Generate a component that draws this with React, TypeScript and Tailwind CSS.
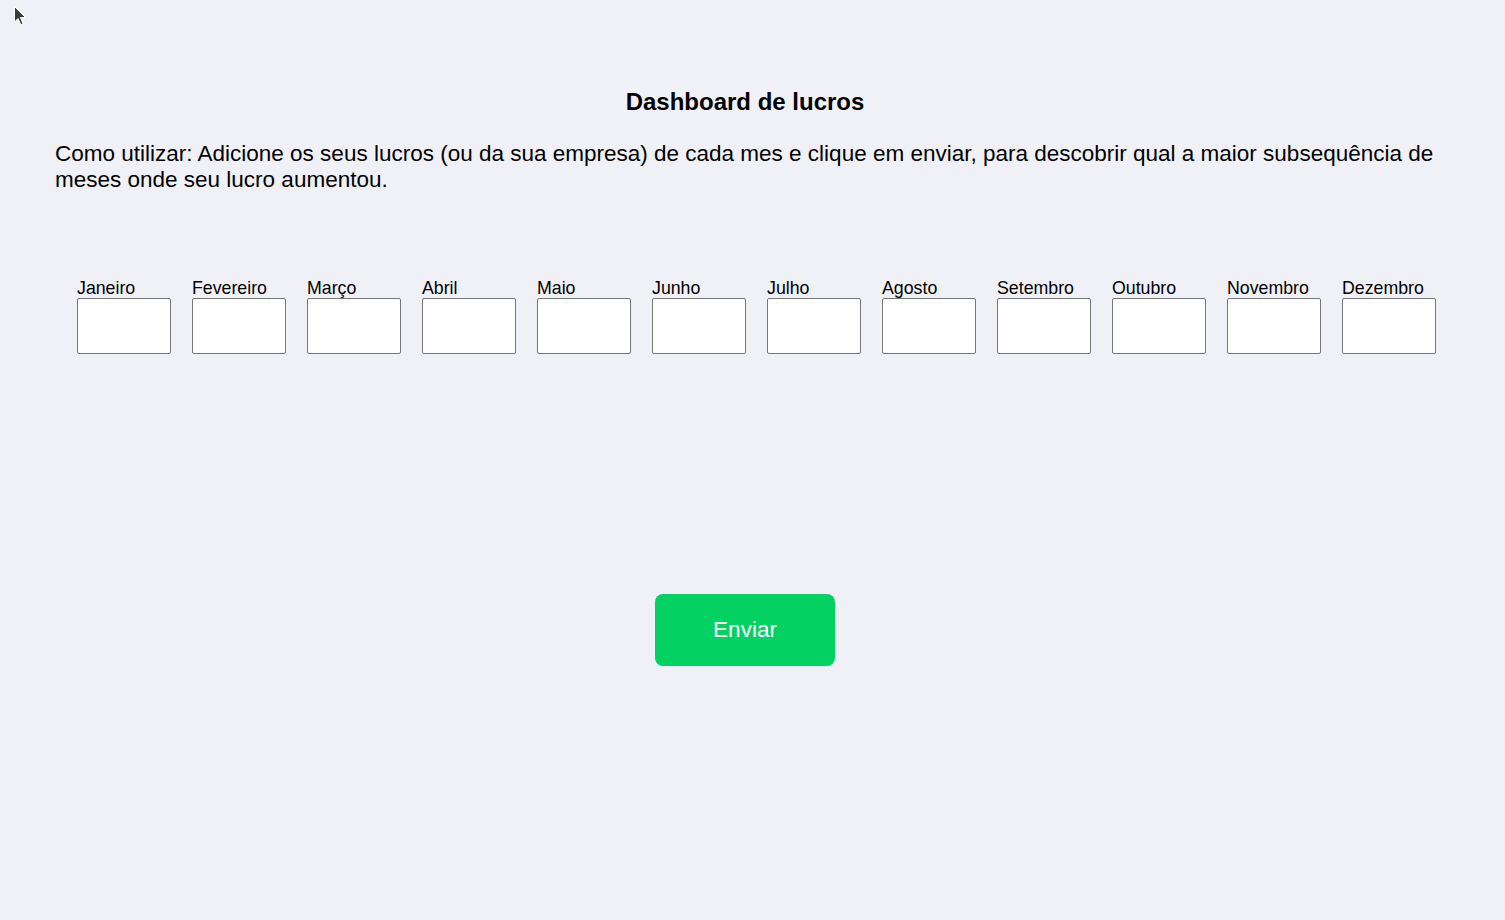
import React from "react";

const months = ["Janeiro","Fevereiro","Março","Abril","Maio","Junho","Julho","Agosto","Setembro","Outubro","Novembro","Dezembro"];

export default function App() {
  return (
    <div className="relative min-h-[920px] w-full bg-[#f0f1f6] text-black" style={{ fontFamily: '"Liberation Sans", Arial, sans-serif' }}>
      <svg className="absolute left-[13px] top-[5px]" width="16" height="22" viewBox="0 0 16 22">
        <path d="M1.5 1.5 L1.5 17 L5 13.5 L8 20 L10 19 L7.5 12.5 L12.5 12.5 Z" fill="#3a3a3a" stroke="#ffffff" strokeWidth="1" />
      </svg>
      <div className="pl-[55px] pr-[70px] pt-[88px]">
        <h1 className="text-center text-[24px] font-bold leading-[28px]">Dashboard de lucros</h1>
        <p className="mt-[25px] text-[22.5px] leading-[26px]">
          Como utilizar: Adicione os seus lucros (ou da sua empresa) de cada mes e clique em enviar, para descobrir qual a maior subsequência de meses onde seu lucro aumentou.
        </p>
        <div className="mt-[85px] flex gap-[21px] pl-[22px]">
          {months.map((m) => (
            <label key={m} className="flex w-[94px] flex-col">
              <span className="whitespace-nowrap text-[17.75px] leading-[20px]">{m}</span>
              <input type="text" className="h-[56px] w-[94px] rounded-[2px] border border-[#767676] bg-white" />
            </label>
          ))}
        </div>
        <div className="mt-[240px] flex justify-center">
          <button className="h-[72px] w-[180px] rounded-[8px] bg-[#03d263] text-[22.5px] text-white">Enviar</button>
        </div>
      </div>
    </div>
  );
}
